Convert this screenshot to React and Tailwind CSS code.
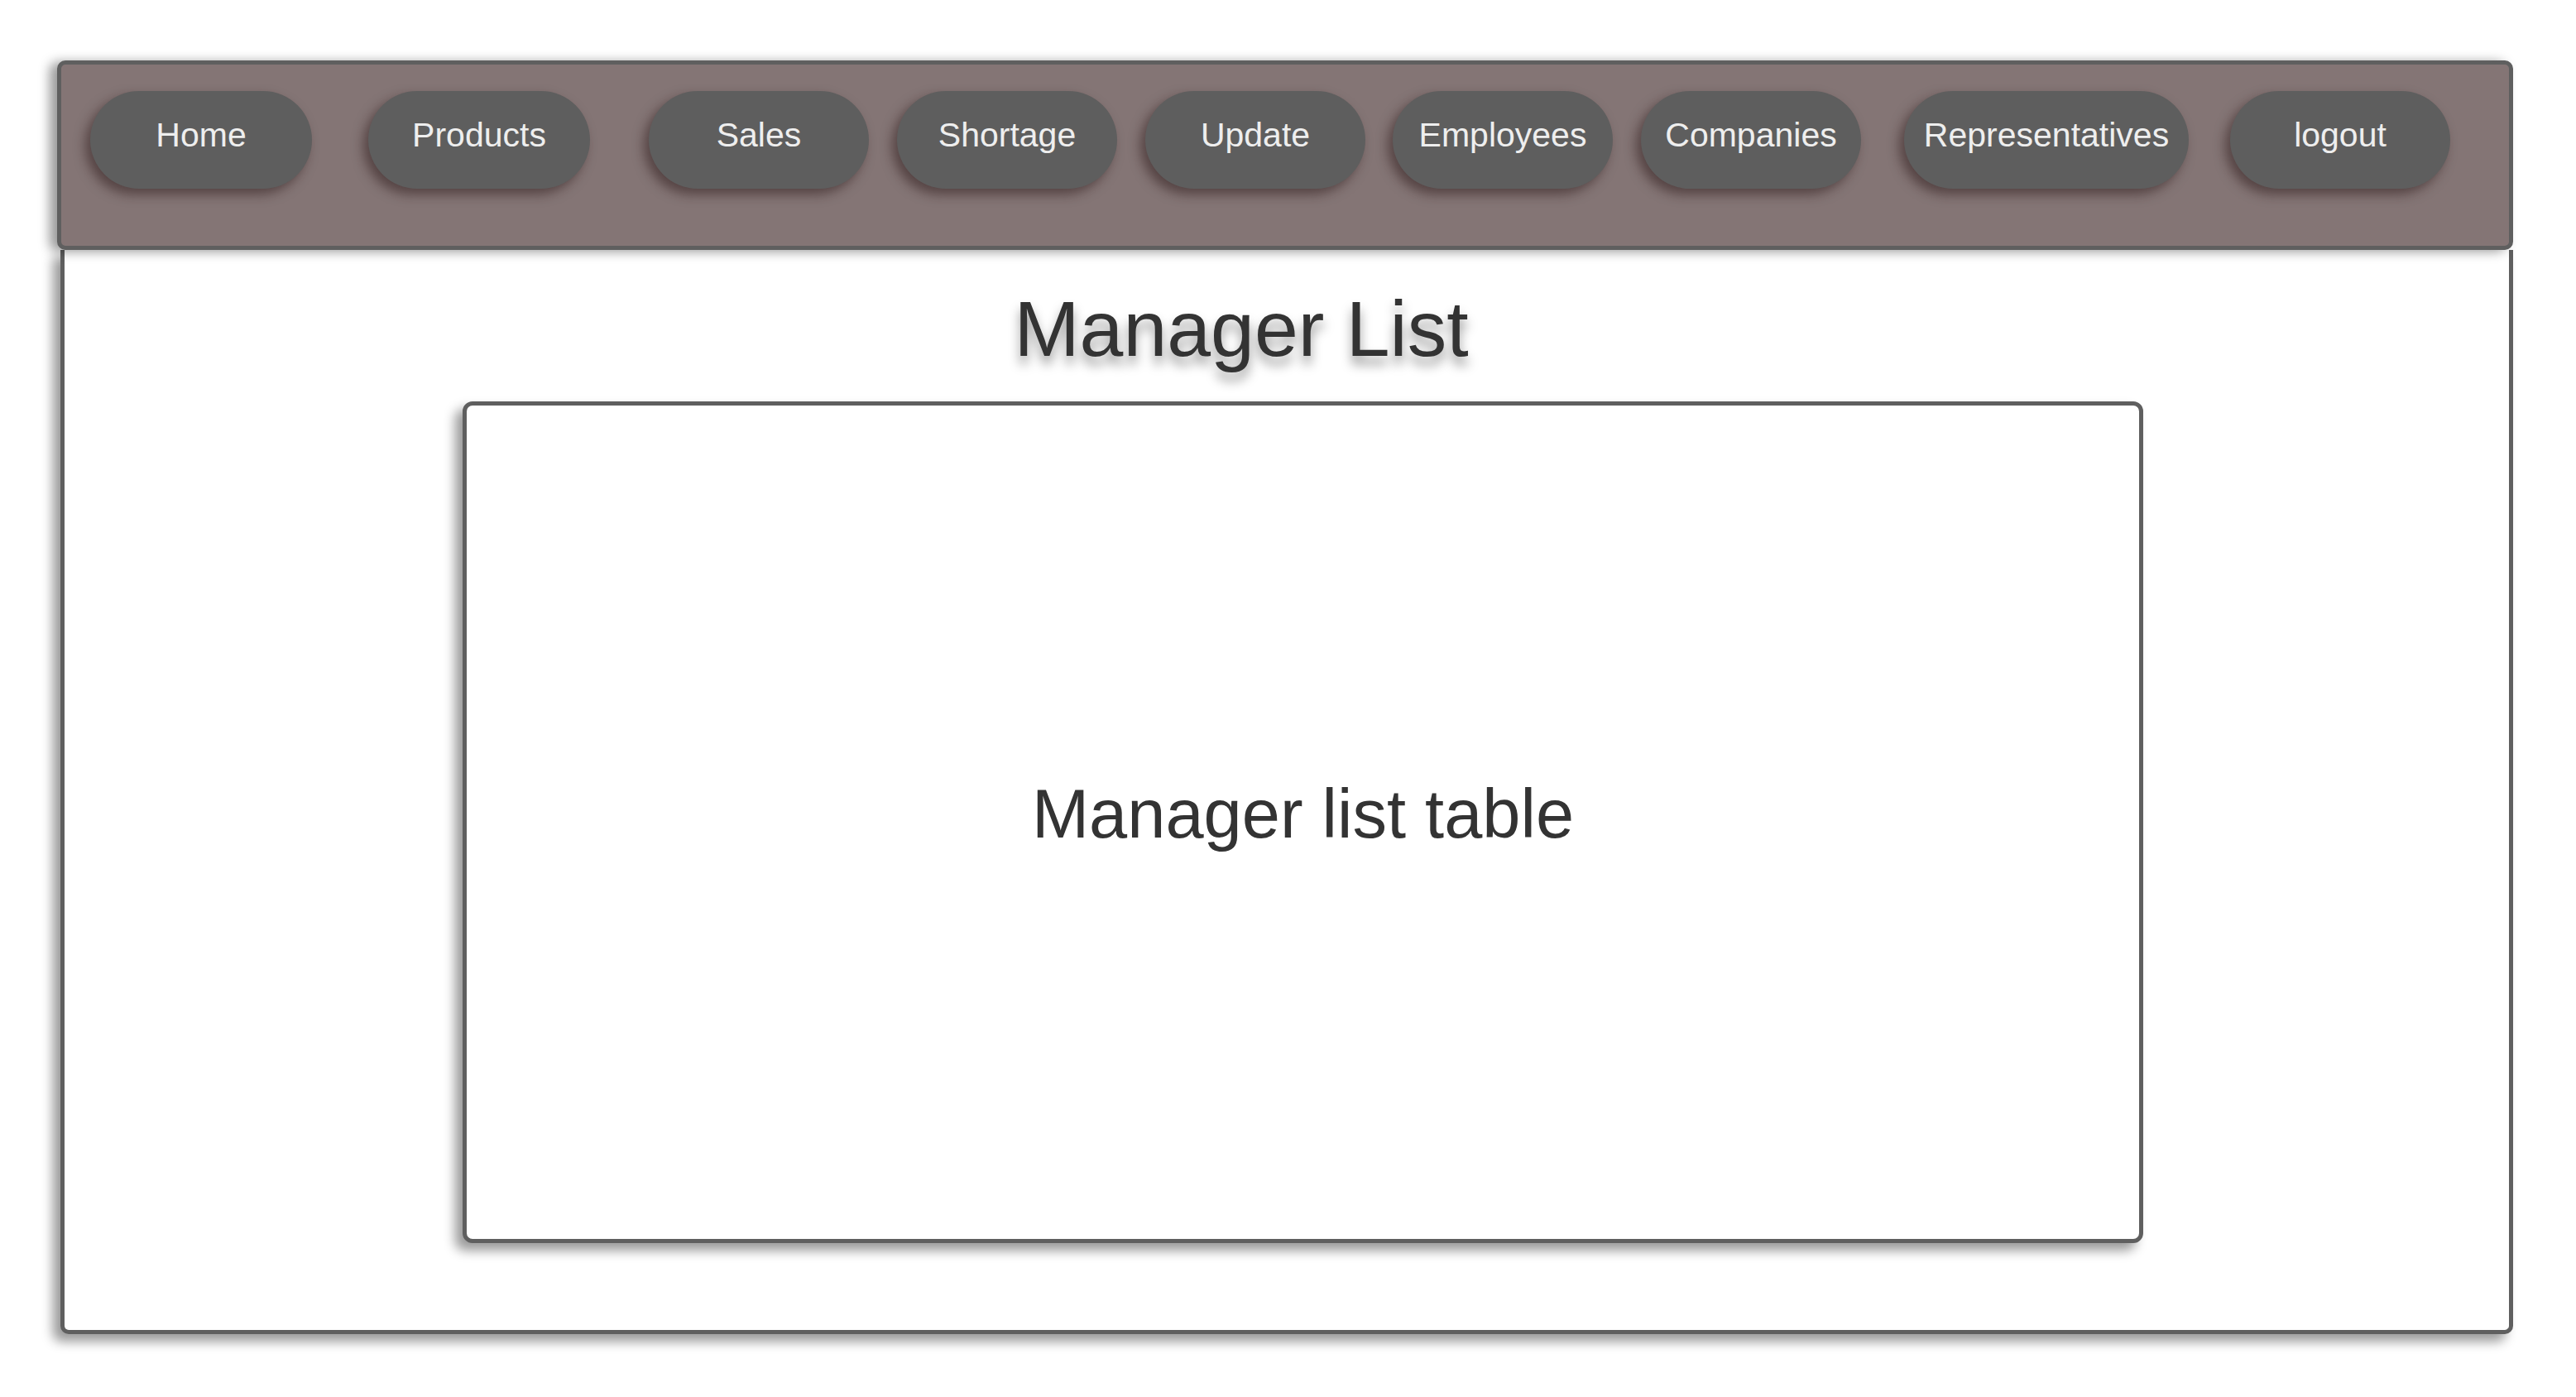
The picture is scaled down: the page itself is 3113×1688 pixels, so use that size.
const links = [
  { label: 'Home', cls: 'w-[268px]' },
  { label: 'Products', cls: 'ml-[68px] w-[268px]' },
  { label: 'Sales', cls: 'ml-[71px] w-[266px]' },
  { label: 'Shortage', cls: 'ml-[34px] w-[266px]' },
  { label: 'Update', cls: 'ml-[34px] w-[266px]' },
  { label: 'Employees', cls: 'ml-[33px] w-[266px]' },
  { label: 'Companies', cls: 'ml-[34px] w-[266px]' },
  { label: 'Representatives', cls: 'ml-[52px] w-[344px]' },
  { label: 'logout', cls: 'ml-[50px] w-[266px]' },
];

const NavButton = ({ label, cls }) => (
  <button
    className={`${cls} h-[118px] shrink-0 rounded-full bg-[#5e5e5e] pb-[10px] text-[41px] text-[#eeeeee] shadow-[-6px_7px_14px_rgba(40,20,20,0.5)]`}
  >
    {label}
  </button>
);

export default function App() {
  return (
    <div
      className="min-h-[1688px] w-[3113px] bg-white pt-[73px]"
      style={{ fontFamily: '"Liberation Sans", Arial, sans-serif' }}
    >
      <div className="ml-[69px] w-[2968px]">
        <nav className="relative z-10 flex h-[229px] items-start rounded-[10px] border-[5px] border-[#5f5f5f] bg-[#847575] pl-[35px] pt-[32px] shadow-[-9px_2px_14px_rgba(0,0,0,0.4)]">
          {links.map((l) => (
            <NavButton key={l.label} {...l} />
          ))}
        </nav>

        <main className="ml-[4px] flex h-[1310px] w-[2964px] flex-col rounded-b-[10px] border-x-[5px] border-b-[5px] border-[#5f5f5f] bg-white shadow-[-9px_9px_14px_rgba(0,0,0,0.4)]">
          <h1 className="mt-[48px] pr-[110px] text-center text-[95px] leading-none text-[#333333] [text-shadow:0_10px_14px_rgba(0,0,0,0.4)]">
            Manager List
          </h1>

          <section className="ml-[481px] mt-[40px] flex h-[1017px] w-[2031px] items-center justify-center rounded-[12px] border-[5px] border-[#5f5f5f] bg-white pb-[20px] shadow-[-9px_9px_14px_rgba(0,0,0,0.4)]">
            <p className="text-[83px] leading-none text-[#333333]">Manager list table</p>
          </section>
        </main>
      </div>
    </div>
  );
}
